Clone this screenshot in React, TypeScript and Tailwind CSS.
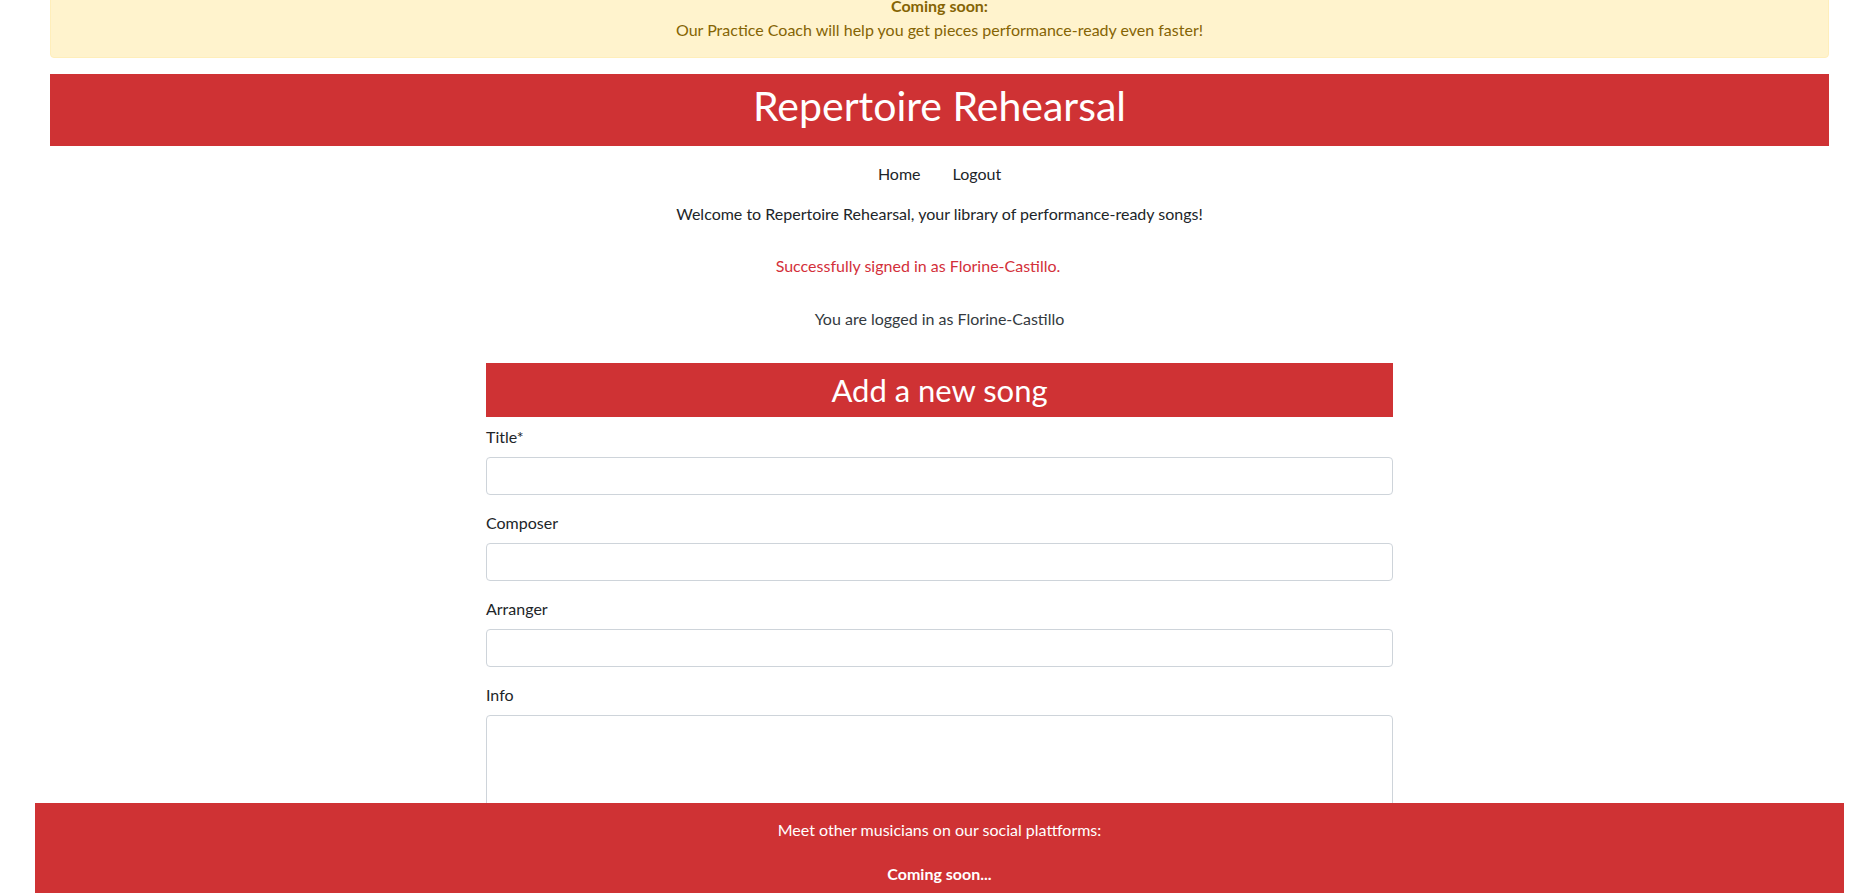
import React from "react";

const RED = "bg-[#cf3234]";

function Field({ label, textarea }: { label: string; textarea?: boolean }) {
  return (
    <div className="mb-4">
      <label className="block mb-2 leading-6 text-[16px] text-[#212529]">{label}</label>
      {textarea ? (
        <textarea
          rows={3}
          className="block w-full h-[120px] rounded-[4px] border border-[#ced4da] bg-white px-3 py-1.5 text-[16px] outline-none resize-none"
        />
      ) : (
        <input
          type="text"
          className="block w-full h-[38px] rounded-[4px] border border-[#ced4da] bg-white px-3 py-1.5 text-[16px] outline-none"
        />
      )}
    </div>
  );
}

export default function App() {
  return (
    <div
      className="min-h-[893px] bg-white text-[#212529] text-[16px] leading-6"
      style={{ fontFamily: "Lato, 'Noto Sans', 'Liberation Sans', sans-serif" }}
    >
      <div className="pl-[50px] pr-[42px]">
        {/* Alert */}
        <div className="-mt-[19px] rounded-[4px] border border-[#ffeeba] bg-[#fff3cd] pt-[12px] pb-[15px] px-5 text-center text-[#856404]">
          <div className="font-bold leading-6">Coming soon:</div>
          <div className="leading-6">Our Practice Coach will help you get pieces performance-ready even faster!</div>
        </div>

        {/* Header */}
        <header className={`mt-[16px] ${RED} h-[72px] pt-[8px] text-center`}>
          <h1 className="text-[41px] leading-[48px] font-normal text-white">Repertoire Rehearsal</h1>
        </header>

        {/* Nav */}
        <nav className="mt-[16px] flex justify-center gap-[32px] leading-6">
          <a className="text-[#212529]">Home</a>
          <a className="text-[#212529]">Logout</a>
        </nav>

        <p className="mt-[16px] text-center leading-6">
          Welcome to Repertoire Rehearsal, your library of performance-ready songs!
        </p>

        <p className="mt-[28px] pr-[43px] text-center leading-6 text-[#d3303a]">
          Successfully signed in as Florine-Castillo.
        </p>

        <p className="mt-[29px] text-center leading-6 text-[#343a40]">
          You are logged in as Florine-Castillo
        </p>

        {/* Form */}
        <section className="mx-auto mt-[32px] w-[907px]">
          <h2 className={`${RED} py-[8px] text-center text-[31px] leading-[38px] font-normal text-white`}>
            Add a new song
          </h2>
          <form className="mt-[8px]">
            <Field label="Title*" />
            <Field label="Composer" />
            <Field label="Arranger" />
            <Field label="Info" textarea />
          </form>
        </section>
      </div>

      {/* Footer */}
      <footer className={`fixed bottom-0 left-[35px] right-[27px] h-[90px] ${RED} text-center text-white`}>
        <p className="pt-[15px] leading-6 text-[16px]">Meet other musicians on our social plattforms:</p>
        <p className="mt-[20px] leading-6 text-[16px] font-bold">Coming soon...</p>
      </footer>
    </div>
  );
}
